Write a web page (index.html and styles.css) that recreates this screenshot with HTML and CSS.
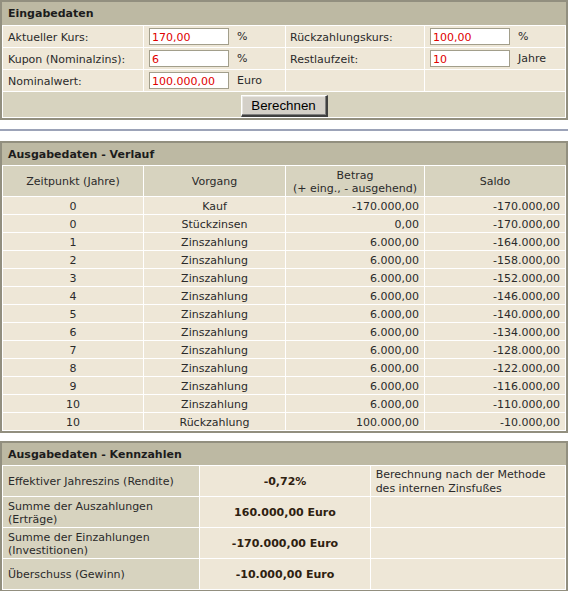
FILE: index.html
```html
<!DOCTYPE html>
<html lang="de">
<head>
<meta charset="utf-8">
<title>Anleihe Rendite</title>
<link rel="stylesheet" href="styles.css">
</head>
<body>
<div class="panel panel-in">
  <div class="panel-title title-tall">Eingabedaten</div>
  <table class="grid">
    <colgroup><col class="c140"><col class="c141"><col class="c138"><col class="c140"></colgroup>
    <tr class="r21">
      <td class="lbl">Aktueller Kurs:</td>
      <td class="fld"><input class="inp" value="170,00"><span class="unit">%</span></td>
      <td class="lbl lbl-r">Rückzahlungskurs:</td>
      <td class="fld"><input class="inp" value="100,00"><span class="unit">%</span></td>
    </tr>
    <tr class="r21">
      <td class="lbl">Kupon (Nominalzins):</td>
      <td class="fld"><input class="inp" value="6"><span class="unit">%</span></td>
      <td class="lbl lbl-r">Restlaufzeit:</td>
      <td class="fld"><input class="inp" value="10"><span class="unit">Jahre</span></td>
    </tr>
    <tr class="r21">
      <td class="lbl">Nominalwert:</td>
      <td class="fld"><input class="inp" value="100.000,00"><span class="unit">Euro</span></td>
      <td class="lbl"></td>
      <td class="fld"></td>
    </tr>
    <tr class="r25 dark">
      <td colspan="4" class="btn-cell"><button class="btn">Berechnen</button></td>
    </tr>
  </table>
</div>

<div class="sep"></div>

<div class="panel panel-out">
  <div class="panel-title">Ausgabedaten - Verlauf</div>
  <table class="grid data">
    <colgroup><col class="c140"><col class="c141"><col class="c138"><col class="c140"></colgroup>
    <tr class="dark head">
      <td>Zeitpunkt (Jahre)</td>
      <td>Vorgang</td>
      <td>Betrag<br>(+ eing., - ausgehend)</td>
      <td>Saldo</td>
    </tr>
    <tr><td>0</td><td>Kauf</td><td class="num">-170.000,00</td><td class="num">-170.000,00</td></tr>
    <tr><td>0</td><td>Stückzinsen</td><td class="num">0,00</td><td class="num">-170.000,00</td></tr>
    <tr><td>1</td><td>Zinszahlung</td><td class="num">6.000,00</td><td class="num">-164.000,00</td></tr>
    <tr><td>2</td><td>Zinszahlung</td><td class="num">6.000,00</td><td class="num">-158.000,00</td></tr>
    <tr><td>3</td><td>Zinszahlung</td><td class="num">6.000,00</td><td class="num">-152.000,00</td></tr>
    <tr><td>4</td><td>Zinszahlung</td><td class="num">6.000,00</td><td class="num">-146.000,00</td></tr>
    <tr><td>5</td><td>Zinszahlung</td><td class="num">6.000,00</td><td class="num">-140.000,00</td></tr>
    <tr><td>6</td><td>Zinszahlung</td><td class="num">6.000,00</td><td class="num">-134.000,00</td></tr>
    <tr><td>7</td><td>Zinszahlung</td><td class="num">6.000,00</td><td class="num">-128.000,00</td></tr>
    <tr><td>8</td><td>Zinszahlung</td><td class="num">6.000,00</td><td class="num">-122.000,00</td></tr>
    <tr><td>9</td><td>Zinszahlung</td><td class="num">6.000,00</td><td class="num">-116.000,00</td></tr>
    <tr><td>10</td><td>Zinszahlung</td><td class="num">6.000,00</td><td class="num">-110.000,00</td></tr>
    <tr><td>10</td><td>Rückzahlung</td><td class="num">100.000,00</td><td class="num">-10.000,00</td></tr>
  </table>
</div>

<div class="panel panel-kpi">
  <div class="panel-title">Ausgabedaten - Kennzahlen</div>
  <table class="grid kpi">
    <colgroup><col class="c196"><col class="c169"><col class="c194"></colgroup>
    <tr class="r30">
      <td class="klbl">Effektiver Jahreszins (Rendite)</td>
      <td class="kval">-0,72%</td>
      <td class="knote">Berechnung nach der Methode des internen Zinsfußes</td>
    </tr>
    <tr class="r30">
      <td class="klbl">Summe der Auszahlungen (Erträge)</td>
      <td class="kval">160.000,00 Euro</td>
      <td class="knote"></td>
    </tr>
    <tr class="r30">
      <td class="klbl">Summe der Einzahlungen (Investitionen)</td>
      <td class="kval">-170.000,00 Euro</td>
      <td class="knote"></td>
    </tr>
    <tr class="r30">
      <td class="klbl">Überschuss (Gewinn)</td>
      <td class="kval">-10.000,00 Euro</td>
      <td class="knote"></td>
    </tr>
  </table>
</div>
</body>
</html>
```

FILE: styles.css
```css
html, body {
  margin: 0;
  padding: 0;
  background: #ffffff;
}
body {
  font-family: "DejaVu Sans", Verdana, sans-serif;
  font-size: 11px;
  color: #2a2a2a;
}
.panel {
  width: 568px;
  box-sizing: border-box;
  border: 2px solid #928f7f;
  background: #ffffff;
}
.panel-out { margin-top: 10px; }
.panel-kpi { margin-top: 8px; }
.panel-title {
  height: 22px;
  line-height: 24px;
  background: #bdb9a3;
  color: #1c1c1c;
  font-weight: bold;
  padding-left: 6px;
}
.title-tall {
  height: 23px;
  line-height: 23px;
}
.grid {
  width: 100%;
  table-layout: fixed;
  border-spacing: 1px;
  background: #ffffff;
}
.grid td {
  background: #eee7d7;
  padding: 1px 0 0 0;
  vertical-align: middle;
}
.c140 { width: 140px; }
.c141 { width: 141px; }
.c138 { width: 138px; }
.c196 { width: 196px; }
.c169 { width: 169px; }
.c194 { width: 194px; }
.grid .r21 td { height: 20px; }
.grid .r25 td { height: 25px; }
.grid .r30 td { height: 29px; }
.grid .dark td,
.grid td.klbl { background: #d7d3bf; }
.grid td.lbl { padding-left: 5px; }
.grid td.lbl-r { padding-left: 4px; }
.grid td.fld { padding-left: 5px; padding-top: 0; }
.inp {
  box-sizing: border-box;
  width: 80px;
  height: 17px;
  border: 1px solid #a29e8b;
  background: #ffffff;
  color: #e00000;
  font-family: "DejaVu Sans", Verdana, sans-serif;
  font-size: 11px;
  padding: 1px 2px 0 2px;
  margin: 0;
  vertical-align: middle;
}
.unit {
  margin-left: 8px;
  vertical-align: middle;
}
.grid td.btn-cell {
  text-align: center;
  vertical-align: bottom;
  padding-top: 0;
}
.btn {
  width: 87px;
  height: 22px;
  padding: 0;
  font-family: "Liberation Sans", Arial, sans-serif;
  font-size: 13.33px;
  color: #000000;
  background: #d4d0c8;
  border-style: solid;
  border-width: 1px 2px 2px 1px;
  border-color: #ffffff #404040 #404040 #ffffff;
  box-shadow: inset -1px -1px 0 #808080, inset 1px 1px 0 #e8e6e0;
  display: block;
  margin: 0 auto;
}
.data td {
  height: 16px;
  text-align: center;
}
.data .head td {
  height: 29px;
  line-height: 13px;
}
.data td.num {
  text-align: right;
  padding-right: 5px;
}
.grid td.klbl {
  padding-left: 5px;
  line-height: 13px;
}
.kval {
  text-align: center;
  font-weight: bold;
  color: #2e2110;
}
.grid td.knote {
  padding-left: 5px;
  line-height: 14px;
}
.sep {
  height: 2px;
  margin-top: 9px;
  background: #9ca3b8;
  width: 568px;
}
```
